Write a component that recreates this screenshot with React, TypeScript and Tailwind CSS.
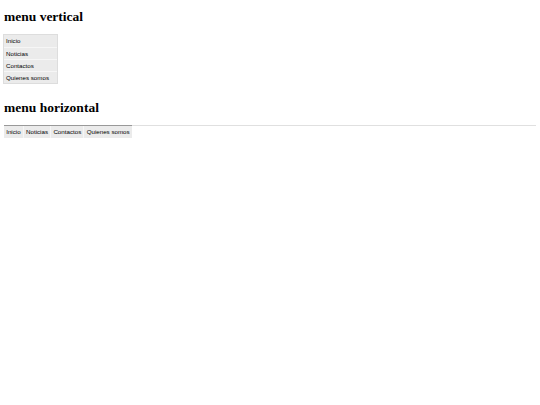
const items = ["Inicio", "Noticias", "Contactos", "Quienes somos"]

export default function App() {
    return (
        <div className="min-h-screen bg-white px-[3px] font-['Liberation_Sans',Arial,sans-serif] text-black">
            <h2 className="pt-[9px] pl-[1px] text-[13.5px] leading-[16px] font-bold font-['Liberation_Serif','Times_New_Roman',serif]">
                menu vertical
            </h2>
            <ul className="mt-[9px] w-[55px] border border-[#dddddd] bg-[#ebebeb]">
                {items.map((item, i) => (
                    <li
                        key={item}
                        className={"h-[12px] pl-[2px] text-[6.2px] leading-[12px] text-black " + (i > 0 ? "border-t border-[#f6f6f6]" : "")}
                    >
                        {item}
                    </li>
                ))}
            </ul>
            <h2 className="mt-[16px] pl-[1px] text-[13.5px] leading-[16px] font-bold font-['Liberation_Serif','Times_New_Roman',serif]">
                menu horizontal
            </h2>
            <div className="mt-[9px] ml-[1px] mr-[1px] border-t border-[#e0e0e0]">
                <ul className="flex w-fit -mt-px border-t border-[#999999] bg-[#ebebeb]">
                    {items.map((item, i) => (
                        <li
                            key={item}
                            className={"h-[12px] px-[2.2px] text-[6.2px] leading-[12px] text-black " + (i > 0 ? "border-l border-[#f6f6f6]" : "")}
                        >
                            {item}
                        </li>
                    ))}
                </ul>
            </div>
        </div>
    )
}
